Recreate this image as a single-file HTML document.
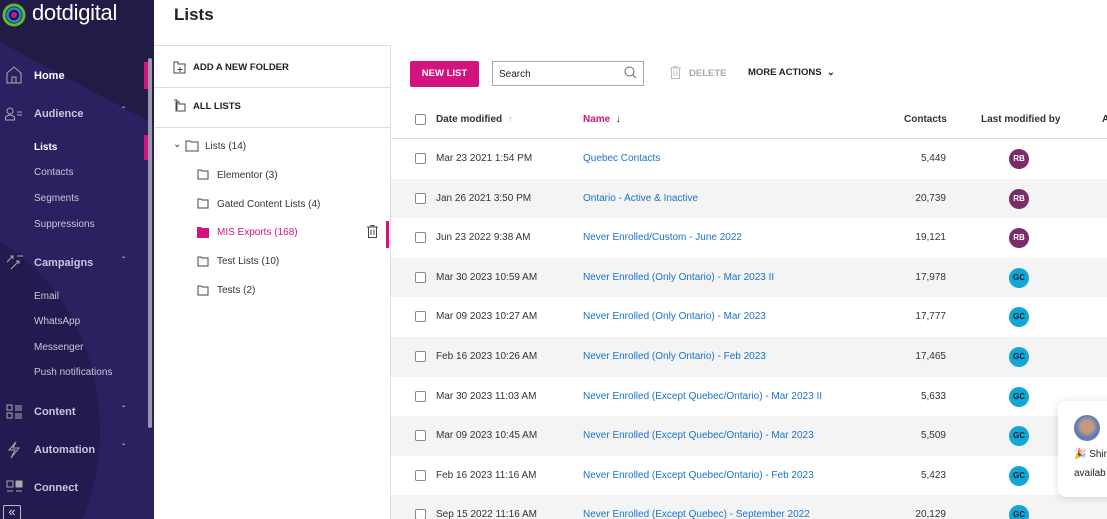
<!DOCTYPE html>
<html style="width:1107px;height:519px;overflow:hidden"><head><meta charset="utf-8"><style>
*{margin:0;padding:0;box-sizing:border-box}
body{width:1107px;height:519px;overflow:hidden;font-family:"Liberation Sans",Arial,sans-serif;background:#fff;position:relative;color:#222}
.clip{position:absolute;left:0;top:0;width:1107px;height:519px;overflow:hidden}
.sb{position:absolute;left:0;top:0;width:154px;height:519px;background:#2a2160;overflow:hidden}
.sb .bg1{position:absolute;left:10px;top:-150px;width:300px;height:260px;background:#221b45;transform:rotate(28deg)}
.sb .bg2{position:absolute;left:-260px;top:220px;width:360px;height:420px;border-radius:50%;background:#231b4f}
.sb .t{position:absolute;color:#c9c6dc;font-size:10px}
.sb .h{position:absolute;color:#c9c6dc;font-size:11px;font-weight:bold}
.pk{position:absolute;background:#d3137e}
.logo{position:absolute;left:32px;top:0px;color:#fff;font-size:22px;letter-spacing:-0.3px}
.hdr{position:absolute;left:174px;top:5px;font-size:17px;font-weight:bold;color:#222}
.fp{position:absolute;left:154px;top:45px;width:237px;height:474px;border-right:1px solid #ddd;border-top:1px solid #ddd}
.fp .row{position:absolute;left:0;width:236px;border-bottom:1px solid #ddd}
.ft{position:absolute;font-size:10px;color:#333}
.cb{position:absolute;left:415px;width:11px;height:11px;border:1px solid #888;border-radius:2px;background:#fff}
.tr{position:absolute;left:391px;width:716px;height:39.6px}
.tr.g{background:#f4f4f4}
.c{position:absolute;font-size:10px;top:14px;color:#333}
.a{color:#1a73c9}
.av{position:absolute;left:1009px;top:10px;width:20px;height:20px;border-radius:50%;color:#fff;font-size:8px;font-weight:bold;text-align:center;line-height:20px}
</style></head><body><div class="clip">
<div class="sb">
<div class="bg1"></div><div class="bg2"></div>
<svg style="position:absolute;left:2px;top:3px" width="24" height="24"><circle cx="12" cy="12" r="10" fill="none" stroke="#5fb82e" stroke-width="3"/><circle cx="12" cy="12" r="6.5" fill="none" stroke="#1d8fd1" stroke-width="2.5"/><circle cx="12" cy="12" r="3" fill="#d3137e"/></svg>
<div class="logo">dotdigital</div>
<div style="position:absolute;left:148px;top:58px;width:4px;height:370px;background:#9a98a8;border-radius:2px"></div>
<div class="pk" style="left:144px;top:62px;width:4px;height:27px"></div>
<div class="pk" style="left:144px;top:135px;width:4px;height:25px"></div>
<svg style="position:absolute;left:6px;top:66px" width="16" height="18" fill="none" stroke="#aaa" stroke-width="1"><path d="M1 7 L8 1 L15 7 V17 H1Z M6 17 V11 H10 V17"/></svg>
<div class="h" style="left:34px;top:70px;color:#fff">Home</div>
<svg style="position:absolute;left:5px;top:107px" width="18" height="14" fill="none" stroke="#aaa"><circle cx="5" cy="4" r="3"/><path d="M0.5 13 V10 Q5 6 9.5 10 V13Z M12 5H17 M12 8H17"/></svg>
<div class="h" style="left:34px;top:108px">Audience</div><div class="t" style="left:122px;top:106px">ˆ</div>
<div class="t" style="left:34px;top:142px;color:#fff;font-weight:bold">Lists</div>
<div class="t" style="left:34px;top:167px">Contacts</div>
<div class="t" style="left:34px;top:193px">Segments</div>
<div class="t" style="left:34px;top:219px">Suppressions</div>
<svg style="position:absolute;left:6px;top:254px" width="18" height="16" fill="none" stroke="#aaa"><path d="M1 8 L7 2 M4 2H7V5 M5 15 L13 7 M10 7H13V10 M11 2 L17 2"/></svg>
<div class="h" style="left:34px;top:257px">Campaigns</div><div class="t" style="left:122px;top:256px">ˆ</div>
<div class="t" style="left:34px;top:291px">Email</div>
<div class="t" style="left:34px;top:316px">WhatsApp</div>
<div class="t" style="left:34px;top:342px">Messenger</div>
<div class="t" style="left:34px;top:367px">Push notifications</div>
<svg style="position:absolute;left:6px;top:404px" width="17" height="15" fill="none" stroke="#aaa"><rect x="1" y="1" width="5" height="5"/><rect x="1" y="9" width="5" height="5"/><path d="M9 2H16M9 4H16M9 6H16M9 10H16M9 12H16M9 14H16"/></svg>
<div class="h" style="left:34px;top:406px">Content</div><div class="t" style="left:122px;top:405px">ˇ</div>
<svg style="position:absolute;left:7px;top:441px" width="14" height="18" fill="none" stroke="#aaa"><path d="M9 1 L2 9 H8 L4 17 L12 7 H6Z"/></svg>
<div class="h" style="left:34px;top:444px">Automation</div><div class="t" style="left:122px;top:443px">ˇ</div>
<svg style="position:absolute;left:6px;top:480px" width="17" height="14" fill="none" stroke="#aaa"><rect x="1" y="1" width="6" height="6"/><rect x="10" y="1" width="6" height="6" fill="#aaa"/><path d="M1 11H7M10 11H16"/></svg>
<div class="h" style="left:34px;top:482px">Connect</div>
<div style="position:absolute;left:3px;top:505px;width:18px;height:14px;border:1px solid #bbb;border-bottom:none;border-radius:2px 2px 0 0;color:#ddd;font-size:13px;line-height:12px;text-align:center;overflow:hidden">«</div>
</div>

<div class="hdr">Lists</div>

<div class="fp">
<div class="row" style="top:0;height:42px"></div>
<div class="row" style="top:42px;height:40px"></div>
<svg style="position:absolute;left:19px;top:15px" width="13" height="13" fill="none" stroke="#444"><path d="M1 1H5V3H12V12H1Z M7 6V11 M4.5 8.5H9.5"/></svg>
<div class="ft" style="left:39px;top:16px;font-weight:bold;font-size:9.5px;color:#222">ADD A NEW FOLDER</div>
<svg style="position:absolute;left:19px;top:53px" width="13" height="13" fill="none" stroke="#444"><path d="M1 1H4V11 M3 3H6V5H12V12H3Z"/></svg>
<div class="ft" style="left:39px;top:55px;font-weight:bold;font-size:9.5px;color:#222">ALL LISTS</div>
<div class="ft" style="left:19px;top:93px">⌄</div>
<svg style="position:absolute;left:31px;top:94px" width="14" height="12" fill="none" stroke="#444"><path d="M1 1H5L6 2H13V11H1Z"/></svg>
<div class="ft" style="left:51px;top:95px">Lists (14)</div>
<svg style="position:absolute;left:43px;top:123px" width="12" height="11" fill="none" stroke="#444"><path d="M1 1H4L5 2H11V10H1Z"/></svg>
<div class="ft" style="left:63px;top:124px">Elementor (3)</div>
<svg style="position:absolute;left:43px;top:152px" width="12" height="11" fill="none" stroke="#444"><path d="M1 1H4L5 2H11V10H1Z"/></svg>
<div class="ft" style="left:63px;top:153px">Gated Content Lists (4)</div>
<svg style="position:absolute;left:43px;top:181px" width="12" height="11"><path d="M0 0H4L5 1H12V11H0Z" fill="#d3137e"/></svg>
<div class="ft" style="left:63px;top:181px;color:#d3137e">MIS Exports (168)</div>
<svg style="position:absolute;left:213px;top:179px" width="11" height="13" fill="none" stroke="#444"><path d="M0 2H11 M4 2V0.5H7V2 M1.5 2V12.5H9.5V2 M4 4.5V10 M7 4.5V10"/></svg>
<div class="pk" style="left:232px;top:175px;width:3px;height:27px"></div>
<svg style="position:absolute;left:43px;top:210px" width="12" height="11" fill="none" stroke="#444"><path d="M1 1H4L5 2H11V10H1Z"/></svg>
<div class="ft" style="left:63px;top:210px">Test Lists (10)</div>
<svg style="position:absolute;left:43px;top:239px" width="12" height="11" fill="none" stroke="#444"><path d="M1 1H4L5 2H11V10H1Z"/></svg>
<div class="ft" style="left:63px;top:239px">Tests (2)</div>
</div>

<div style="position:absolute;left:410px;top:61px;width:69px;height:26px;background:#d3137e;border-radius:2px;color:#fff;font-size:9.5px;font-weight:bold;text-align:center;line-height:26px">NEW LIST</div>
<div style="position:absolute;left:492px;top:61px;width:152px;height:25px;border:1px solid #aaa;font-size:10px;padding:7px 6px;color:#222">Search</div>
<svg style="position:absolute;left:624px;top:66px" width="13" height="13" fill="none" stroke="#666"><circle cx="5.5" cy="5.5" r="4.5"/><path d="M9 9L12 12"/></svg>
<svg style="position:absolute;left:670px;top:66px" width="11" height="13" fill="none" stroke="#bbb"><path d="M0 2H11 M4 2V0.5H7V2 M1.5 2V12.5H9.5V2 M4 4.5V10 M7 4.5V10"/></svg>
<div style="position:absolute;left:689px;top:68px;font-size:9.5px;color:#aaa;font-weight:bold">DELETE</div>
<div style="position:absolute;left:748px;top:67px;font-size:9.5px;color:#222;font-weight:bold">MORE ACTIONS &nbsp;⌄</div>

<div class="cb" style="top:114px"></div>
<div style="position:absolute;left:436px;top:114px;font-size:10px;font-weight:bold;color:#333">Date modified <span style="color:#bbb;font-weight:normal">&nbsp;↑</span></div>
<div style="position:absolute;left:583px;top:114px;font-size:10px;font-weight:bold;color:#d3137e">Name <span style="color:#222;font-size:10px">&nbsp;↓</span></div>
<div style="position:absolute;left:904px;top:114px;font-size:10px;font-weight:bold;color:#333">Contacts</div>
<div style="position:absolute;left:981px;top:114px;font-size:10px;font-weight:bold;color:#333">Last modified by</div>
<div style="position:absolute;left:1102px;top:114px;font-size:10px;font-weight:bold;color:#333">A</div>
<div style="position:absolute;left:391px;top:138px;width:716px;height:1px;background:#ddd"></div>

<div class="tr" style="top:139px"><div class="cb" style="left:24px;top:14px"></div><div class="c" style="left:45px">Mar 23 2021 1:54 PM</div><div class="c a" style="left:192px">Quebec Contacts</div><div class="c" style="right:161px">5,449</div><div class="av" style="left:618px;background:#7b2d6a">RB</div></div>
<div class="tr g" style="top:178.6px"><div class="cb" style="left:24px;top:14px"></div><div class="c" style="left:45px">Jan 26 2021 3:50 PM</div><div class="c a" style="left:192px">Ontario - Active &amp; Inactive</div><div class="c" style="right:161px">20,739</div><div class="av" style="left:618px;background:#7b2d6a">RB</div></div>
<div class="tr" style="top:218.2px"><div class="cb" style="left:24px;top:14px"></div><div class="c" style="left:45px">Jun 23 2022 9:38 AM</div><div class="c a" style="left:192px">Never Enrolled/Custom - June 2022</div><div class="c" style="right:161px">19,121</div><div class="av" style="left:618px;background:#7b2d6a">RB</div></div>
<div class="tr g" style="top:257.8px"><div class="cb" style="left:24px;top:14px"></div><div class="c" style="left:45px">Mar 30 2023 10:59 AM</div><div class="c a" style="left:192px">Never Enrolled (Only Ontario) - Mar 2023 II</div><div class="c" style="right:161px">17,978</div><div class="av" style="left:618px;background:#11a6d4;color:#123">GC</div></div>
<div class="tr" style="top:297.4px"><div class="cb" style="left:24px;top:14px"></div><div class="c" style="left:45px">Mar 09 2023 10:27 AM</div><div class="c a" style="left:192px">Never Enrolled (Only Ontario) - Mar 2023</div><div class="c" style="right:161px">17,777</div><div class="av" style="left:618px;background:#11a6d4;color:#123">GC</div></div>
<div class="tr g" style="top:337px"><div class="cb" style="left:24px;top:14px"></div><div class="c" style="left:45px">Feb 16 2023 10:26 AM</div><div class="c a" style="left:192px">Never Enrolled (Only Ontario) - Feb 2023</div><div class="c" style="right:161px">17,465</div><div class="av" style="left:618px;background:#11a6d4;color:#123">GC</div></div>
<div class="tr" style="top:376.6px"><div class="cb" style="left:24px;top:14px"></div><div class="c" style="left:45px">Mar 30 2023 11:03 AM</div><div class="c a" style="left:192px">Never Enrolled (Except Quebec/Ontario) - Mar 2023 II</div><div class="c" style="right:161px">5,633</div><div class="av" style="left:618px;background:#11a6d4;color:#123">GC</div></div>
<div class="tr g" style="top:416.2px"><div class="cb" style="left:24px;top:14px"></div><div class="c" style="left:45px">Mar 09 2023 10:45 AM</div><div class="c a" style="left:192px">Never Enrolled (Except Quebec/Ontario) - Mar 2023</div><div class="c" style="right:161px">5,509</div><div class="av" style="left:618px;background:#11a6d4;color:#123">GC</div></div>
<div class="tr" style="top:455.8px"><div class="cb" style="left:24px;top:14px"></div><div class="c" style="left:45px">Feb 16 2023 11:16 AM</div><div class="c a" style="left:192px">Never Enrolled (Except Quebec/Ontario) - Feb 2023</div><div class="c" style="right:161px">5,423</div><div class="av" style="left:618px;background:#11a6d4;color:#123">GC</div></div>
<div class="tr g" style="top:495.4px;height:23.6px;overflow:hidden"><div class="cb" style="left:24px;top:14px"></div><div class="c" style="left:45px">Sep 15 2022 11:16 AM</div><div class="c a" style="left:192px">Never Enrolled (Except Quebec) - September 2022</div><div class="c" style="right:161px">20,129</div><div class="av" style="left:618px;background:#11a6d4;color:#123">GC</div></div>

<div style="position:absolute;left:1058px;top:401px;width:70px;height:96px;background:#fff;border-radius:8px;box-shadow:0 1px 8px rgba(0,0,0,0.15)">
<div style="position:absolute;left:16px;top:14px;width:26px;height:26px;border-radius:50%;background:radial-gradient(circle at 50% 45%,#c79a80 30%,#5a78b8 60%,#8aa0c0)"></div>
<div style="position:absolute;left:16px;top:48px;font-size:10px;color:#222">🎉 Shir</div>
<div style="position:absolute;left:16px;top:67px;font-size:10px;color:#222">availab</div>
</div>
</div></body></html>
